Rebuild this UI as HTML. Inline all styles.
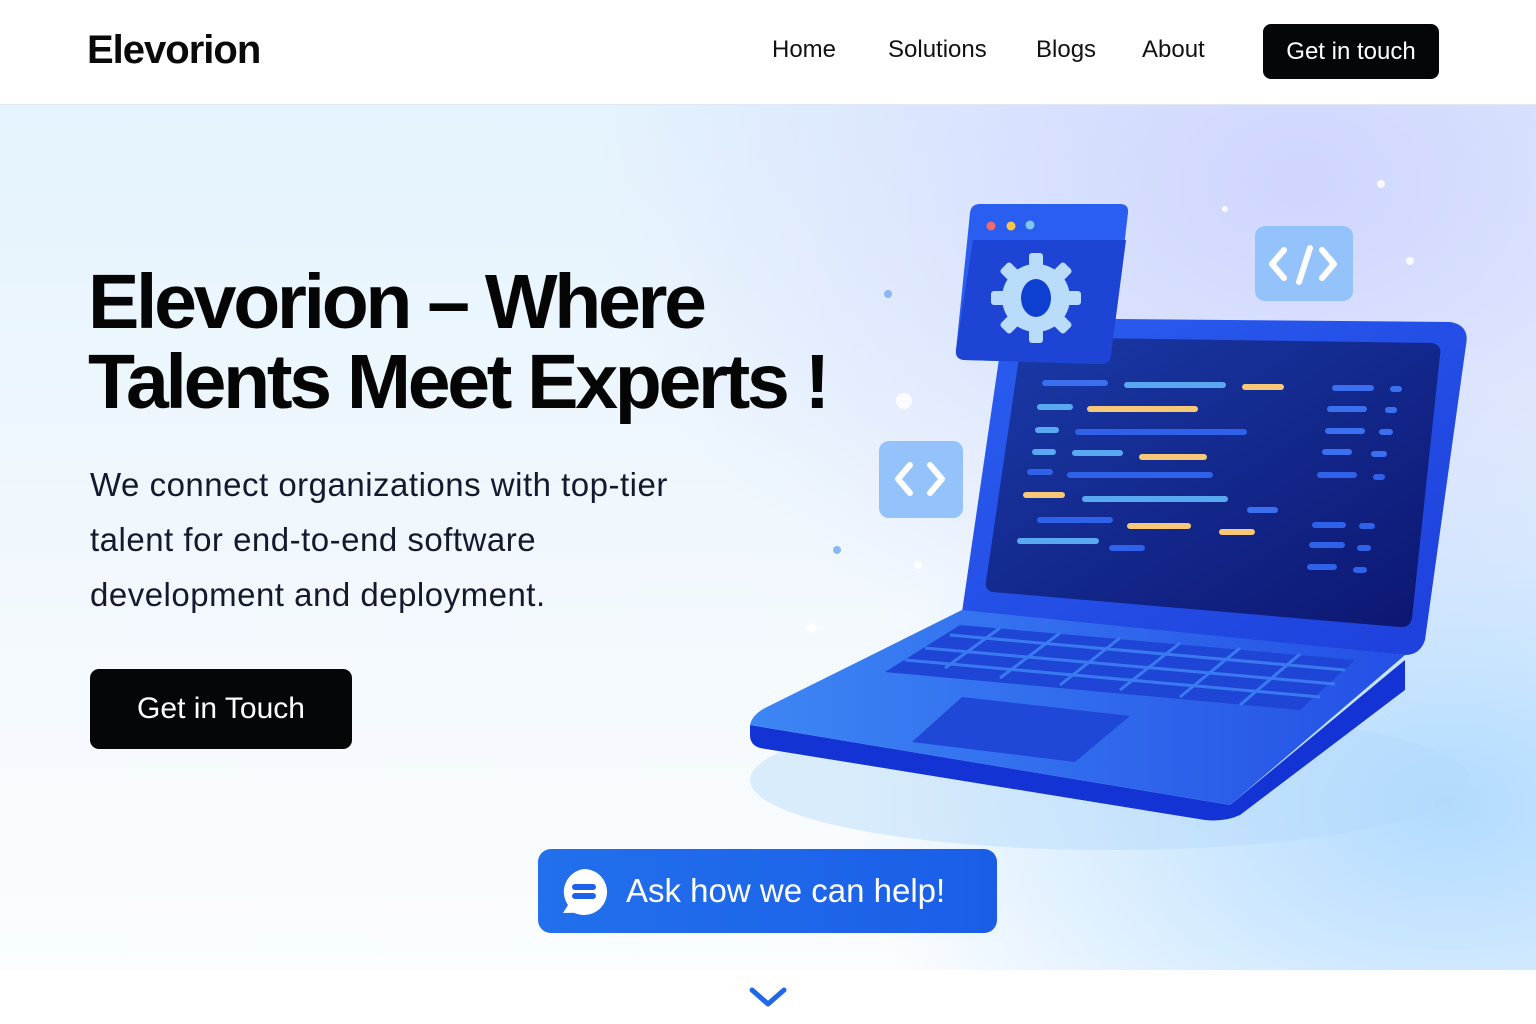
<!DOCTYPE html>
<html><head><meta charset="utf-8"><style>
*{margin:0;padding:0;box-sizing:border-box}
body{width:1536px;height:1024px;overflow:hidden;background:#fff;font-family:"Liberation Sans",sans-serif;position:relative}
.nav{position:absolute;left:0;top:0;width:1536px;height:105px;background:#fff;border-bottom:1px solid #e3e8ef}
.logo{position:absolute;left:87px;top:28px;font-size:40px;font-weight:bold;letter-spacing:-1px;color:#0a0a0a}
.nl{position:absolute;top:36px;font-size:24px;color:#111}
.nbtn{position:absolute;left:1263px;top:24px;width:176px;height:55px;background:#050607;border-radius:8px;color:#fff;font-size:24px;text-align:center;line-height:55px}
.hero{position:absolute;left:0;top:105px;width:1536px;height:865px;
background:radial-gradient(ellipse 700px 520px at 1300px 80px,rgba(205,210,255,.9),rgba(205,210,255,0) 100%),
radial-gradient(ellipse 600px 420px at 1450px 700px,rgba(170,215,255,.9),rgba(170,215,255,0) 100%),
linear-gradient(180deg,#e4f3fd 0%,#f1f8fd 50%,#fbfdff 100%)}
h1{position:absolute;left:88px;top:262px;font-size:77px;line-height:80px;font-weight:bold;letter-spacing:-3.3px;color:#050505}
.p{position:absolute;left:90px;top:457px;font-size:33px;line-height:55px;color:#16192e;width:700px;letter-spacing:0.5px}
.cta{position:absolute;left:90px;top:669px;width:262px;height:80px;background:#050607;border-radius:9px;color:#fff;font-size:30px;text-align:center;line-height:80px}
.ask{position:absolute;left:538px;top:849px;width:459px;height:84px;background:linear-gradient(90deg,#2270ec,#1a5ee8);border-radius:13px;color:#fff;font-size:33px;line-height:84px;padding-left:88px}
</style></head><body>
<div class="nav">
<div class="logo">Elevorion</div>
<div class="nl" style="left:772px">Home</div>
<div class="nl" style="left:888px">Solutions</div>
<div class="nl" style="left:1036px">Blogs</div>
<div class="nl" style="left:1142px">About</div>
<div class="nbtn">Get in touch</div>
</div>
<div class="hero"></div>
<svg style="position:absolute;left:0;top:0" width="1536" height="1024" viewBox="0 0 1536 1024">
<defs>
<linearGradient id="base" x1="0" y1="0" x2="1" y2="0"><stop offset="0" stop-color="#3d86f4"/><stop offset="1" stop-color="#2450e6"/></linearGradient>
<linearGradient id="lid" x1="0" y1="0" x2="1" y2="1"><stop offset="0" stop-color="#2a5ef0"/><stop offset="1" stop-color="#1e3fdc"/></linearGradient>
<linearGradient id="scr" x1="0" y1="0" x2="1" y2="1"><stop offset="0" stop-color="#1a3aa8"/><stop offset="1" stop-color="#0c1670"/></linearGradient>
</defs>
<ellipse cx="1110" cy="780" rx="360" ry="70" fill="#b3dafb" opacity=".45"/>
<path d="M1005 318 L1450 322 Q1470 325 1466 345 L1425 640 Q1420 655 1405 655 L962 612 Z" fill="url(#lid)"/>
<path d="M1022 337 L1432 343 Q1442 345 1440 355 L1412 618 Q1410 628 1400 627 L992 592 Q985 590 986 582 Z" fill="url(#scr)"/>
<path d="M750 725 L1230 805 L1405 660 L1405 690 L1240 815 Q1225 822 1205 820 L760 748 Q750 745 750 735 Z" fill="#1433d4"/>
<path d="M962 610 L1405 655 L1230 805 L750 725 Q752 715 765 708 Z" fill="url(#base)"/>
<g fill="#1e45d6">
<path d="M960 625 L1355 660 L1300 710 L885 672 Z"/>
<path d="M912 742 L962 697 L1130 716 L1075 762 Z" fill="#1f47d8"/>
</g>
<g stroke="#3a7af0" stroke-width="3">
<line x1="950" y1="635" x2="1345" y2="670"/><line x1="925" y1="648" x2="1335" y2="684"/><line x1="905" y1="660" x2="1320" y2="697"/>
<line x1="1000" y1="628" x2="945" y2="668"/><line x1="1060" y1="633" x2="1000" y2="678"/><line x1="1120" y1="638" x2="1060" y2="685"/><line x1="1180" y1="643" x2="1120" y2="690"/><line x1="1240" y1="648" x2="1180" y2="697"/><line x1="1300" y1="654" x2="1240" y2="705"/>
</g>
<g stroke-linecap="round" stroke-width="6">
<path d="M1045 383h60M1335 388h36M1393 389h6" stroke="#3a6ff0"/>
<path d="M1127 385h96" stroke="#5aa8f0"/><path d="M1245 387h36" stroke="#f6c878"/>
<path d="M1040 407h30" stroke="#5aa8f0"/><path d="M1090 409h105" stroke="#f6c878"/><path d="M1330 409h34M1388 410h6" stroke="#3a6ff0"/>
<path d="M1038 430h18" stroke="#5aa8f0"/><path d="M1078 432h166" stroke="#2f62e8"/><path d="M1328 431h34M1382 432h8" stroke="#3a6ff0"/>
<path d="M1035 452h18" stroke="#5aa8f0"/><path d="M1075 453h45" stroke="#5aa8f0"/><path d="M1142 457h62" stroke="#f6c878"/><path d="M1325 452h24M1374 454h10" stroke="#3a6ff0"/>
<path d="M1030 472h20M1070 475h140M1320 475h34M1376 477h6" stroke="#2f62e8"/>
<path d="M1026 495h36" stroke="#f6c878"/><path d="M1085 499h140" stroke="#5aa8f0"/><path d="M1250 510h25" stroke="#3a6ff0"/>
<path d="M1040 520h70M1315 525h28M1362 526h10" stroke="#2f62e8"/><path d="M1130 526h58M1222 532h30" stroke="#f6c878"/>
<path d="M1020 541h76" stroke="#5aa8f0"/><path d="M1112 548h30M1312 545h30M1360 548h8M1310 567h24M1356 570h8" stroke="#2f62e8"/>
</g>
<path d="M980 204 L1120 204 Q1129 204 1128 213 L1111 355 Q1110 364 1100 364 L964 360 Q955 359 956 350 L970 213 Q971 204 980 204 Z" fill="#2a5ef0"/>
<path d="M973 240 L1126 240 L1111 355 Q1110 364 1100 364 L964 360 Q955 359 956 350 Z" fill="#1d44d4"/>
<circle cx="991" cy="226" r="4.5" fill="#f26a6a"/><circle cx="1011" cy="226" r="4.5" fill="#f8c54a"/><circle cx="1030" cy="225" r="4.5" fill="#7cc6f6"/>
<g transform="translate(1036,298)">
<g fill="#b9dcfb">
<circle r="34"/>
<g id="t"><rect x="-7" y="-45" width="14" height="16" rx="3"/></g>
<use href="#t" transform="rotate(45)"/><use href="#t" transform="rotate(90)"/><use href="#t" transform="rotate(135)"/><use href="#t" transform="rotate(180)"/><use href="#t" transform="rotate(225)"/><use href="#t" transform="rotate(270)"/><use href="#t" transform="rotate(315)"/>
</g>
<ellipse rx="15" ry="19" fill="#0d3fd0"/>
</g>
<rect x="1255" y="226" width="98" height="75" rx="10" fill="#94c2fa"/>
<path d="M1284 250l-12 14 12 14M1322 250l12 14-12 14M1310 248l-11 34" stroke="#fff" stroke-width="6" fill="none" stroke-linecap="round" stroke-linejoin="round"/>
<rect x="879" y="441" width="84" height="77" rx="10" fill="#94c2fa"/>
<path d="M910 465l-12 14 12 14M930 465l12 14-12 14" stroke="#fff" stroke-width="6" fill="none" stroke-linecap="round" stroke-linejoin="round"/>
<g fill="#fff" opacity=".85"><circle cx="904" cy="401" r="8"/><circle cx="1381" cy="184" r="4"/><circle cx="1410" cy="261" r="4"/><circle cx="1225" cy="209" r="3"/><circle cx="918" cy="565" r="4"/><circle cx="812" cy="628" r="5"/></g>
<g fill="#8bb8f0"><circle cx="888" cy="294" r="4"/><circle cx="837" cy="550" r="4"/></g>
<path d="M752 990l16 14 16-14" stroke="#1f68e8" stroke-width="5" fill="none" stroke-linecap="round" stroke-linejoin="round"/>
</svg>
<h1>Elevorion – Where<br>Talents Meet Experts !</h1>
<div class="p">We connect organizations with top-tier<br>talent for end-to-end software<br>development and deployment.</div>
<div class="cta">Get in Touch</div>
<div class="ask">Ask how we can help!
<svg style="position:absolute;left:22px;top:18px" width="50" height="50" viewBox="0 0 50 50"><path d="M24 2a23 23 0 1 1-10 43.7L3 46l5-8A23 23 0 0 1 24 2z" fill="#fff"/><path d="M15 20h18M15 29h18" stroke="#1f62ea" stroke-width="6" stroke-linecap="round"/></svg>
</div>
</body></html>
